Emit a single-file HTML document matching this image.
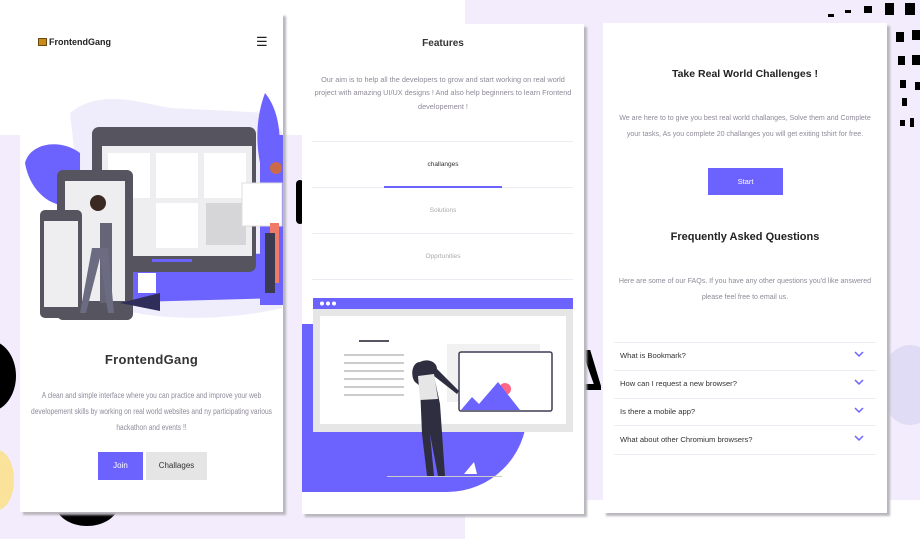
<!DOCTYPE html>
<html><head><meta charset="utf-8"><style>
*{margin:0;padding:0;box-sizing:border-box}
body{width:920px;height:539px;overflow:hidden;background:#f2ecfc;position:relative;font-family:"Liberation Sans",sans-serif}
.abs{position:absolute}
.panel{position:absolute;background:#fff;box-shadow:3px 3px 2px #b9b6bd}
.c{text-align:center;position:absolute;left:0;right:0}
.gray{color:#8f8a99}
.line{position:absolute;height:1px;background:#ececf2}
.l{display:block;white-space:nowrap;margin:0 -80px}
</style></head><body>
<div class="abs" style="left:0;top:0;width:465px;height:135px;background:#fff"></div>
<div class="abs" style="left:465px;top:500px;width:455px;height:39px;background:#fff"></div>
<div class="abs" style="left:-40px;top:340px;width:56px;height:72px;border-radius:50%;background:#000"></div>
<div class="abs" style="left:-20px;top:450px;width:34px;height:60px;border-radius:50%;background:#fbe29a"></div>
<div class="abs" style="left:55px;top:480px;width:64px;height:46px;border-radius:50%;background:#000"></div>
<div class="abs" style="left:880px;top:345px;width:60px;height:80px;border-radius:50%;background:#e0dcf5"></div>
<div class="abs" style="left:296px;top:180px;width:8px;height:44px;border-radius:4px;background:#000"></div>
<div class="abs" style="left:583px;top:350px;width:18px;height:40px;background:#000;clip-path:polygon(0 0,40% 0,100% 90%,100% 100%,0 100%,0 85%,60% 85%,0 10%)"></div>
<svg class="abs" style="left:800px;top:0" width="120" height="150"><g fill="#000">
<rect x="64" y="6" width="8" height="7"/><rect x="85" y="3" width="9" height="12"/><rect x="105" y="3" width="10" height="12"/>
<rect x="112" y="30" width="8" height="10"/><rect x="96" y="32" width="8" height="10"/><rect x="112" y="55" width="8" height="10"/><rect x="98" y="56" width="7" height="9"/>
<rect x="100" y="80" width="6" height="8"/><rect x="115" y="82" width="5" height="8"/><rect x="102" y="98" width="5" height="8"/><rect x="110" y="118" width="4" height="9"/><rect x="100" y="120" width="5" height="6"/>
<rect x="45" y="10" width="6" height="3"/><rect x="28" y="14" width="6" height="3"/></g></svg>

<!-- PANEL 1 -->
<div class="panel" style="left:20px;top:13px;width:263px;height:499px">
 <div class="abs" style="left:18px;top:25px;width:9px;height:8px;background:#c98a1a;border:1px solid #6b4a10"></div>
 <div class="abs" style="left:29px;top:24px;font-size:9px;font-weight:bold;color:#222">FrontendGang</div>
 <div class="abs" style="left:236px;top:21px;font-size:13px;color:#222">☰</div>
 <svg class="abs" style="left:0;top:60px" width="263" height="260">
  <path d="M50 40 C80 15 120 30 150 35 L250 40 L262 60 L262 235 C200 250 100 250 70 220 Z" fill="#efedfc"/>
  <rect x="240" y="62" width="23" height="170" fill="#6c63ff"/>
  <path d="M80 230 L262 225 L262 180 L90 185 Z" fill="#6c63ff"/>
  <path d="M245 20 C230 60 240 100 250 120 C265 80 262 40 245 20Z" fill="#6c63ff"/>
  <path d="M5 90 C10 70 40 65 60 80 L60 130 C35 140 10 120 5 90Z" fill="#6c63ff"/>
  <rect x="72" y="54" width="164" height="145" rx="7" fill="#55545f"/>
  <rect x="82" y="73" width="150" height="110" fill="#eeeef0"/>
  <g fill="#fff"><rect x="88" y="80" width="42" height="45"/><rect x="136" y="80" width="42" height="45"/><rect x="184" y="80" width="42" height="45"/><rect x="136" y="130" width="42" height="45"/></g>
  <rect x="186" y="130" width="40" height="42" fill="#d6d6d8"/>
  <rect x="132" y="186" width="40" height="3" fill="#6c63ff"/>
  <rect x="37" y="97" width="76" height="150" rx="6" fill="#55545f"/>
  <rect x="45" y="108" width="60" height="120" fill="#eeeef0"/>
  <rect x="20" y="137" width="42" height="108" rx="5" fill="#55545f"/>
  <rect x="24" y="148" width="34" height="86" fill="#eeeef0"/>
  <rect x="222" y="110" width="40" height="43" fill="#fff" stroke="#ddd"/>
  <rect x="80" y="150" width="12" height="80" fill="#656577"/>
  <circle cx="78" cy="130" r="8" fill="#3b2a22"/>
  <path d="M72 175 L60 240 L66 240 L80 185 L88 240 L94 240 L88 175Z" fill="#6b6b82"/>
  <rect x="250" y="150" width="9" height="60" fill="#f07a66"/>
  <circle cx="256" cy="95" r="6" fill="#c96a4a"/>
  <rect x="245" y="160" width="10" height="60" fill="#3a3a50"/>
  <rect x="118" y="200" width="18" height="20" fill="#fff"/>
  <path d="M100 230 L140 220 L140 238 Z" fill="#2f2e5a"/>
 </svg>
 <div class="c" style="top:339px;font-size:13px;font-weight:bold;color:#333;letter-spacing:.3px">FrontendGang</div>
 <div class="c gray" style="top:374px;font-size:8.6px;line-height:16px">
  <span class="l" style="transform:scaleX(.77)">A clean and simple interface where you can practice and improve your web</span>
  <span class="l" style="transform:scaleX(.77)">developement skills by working on real world websites and ny participating various</span>
  <span class="l" style="transform:scaleX(.77)">hackathon and events !!</span></div>
 <div class="abs" style="left:78px;top:439px;width:45px;height:28px;background:#6c63ff;color:#fff;font-size:8px;text-align:center;line-height:28px">Join</div>
 <div class="abs" style="left:126px;top:439px;width:61px;height:28px;background:#e5e5e5;color:#333;font-size:8px;text-align:center;line-height:28px">Challages</div>
</div>

<!-- PANEL 2 -->
<div class="panel" style="left:302px;top:24px;width:282px;height:490px;overflow:hidden">
 <div class="c" style="top:14px;font-size:10px;font-weight:bold;color:#333">Features</div>
 <div class="c gray" style="top:49px;font-size:7.3px;line-height:13.3px">
  <span class="l">Our aim is to help all the developers to grow and start working on real world</span>
  <span class="l">project with amazing UI/UX designs ! And also help beginners to learn Frontend</span>
  <span class="l">developement !</span></div>
 <div class="line" style="left:10px;width:261px;top:117px"></div>
 <div class="c" style="top:137px;font-size:6.5px;color:#333">challanges</div>
 <div class="line" style="left:10px;width:261px;top:163px"></div>
 <div class="abs" style="left:82px;width:118px;top:162px;height:2px;background:#6c63ff"></div>
 <div class="c" style="top:183px;font-size:6.5px;color:#aaa">Solutions</div>
 <div class="line" style="left:10px;width:261px;top:209px"></div>
 <div class="c" style="top:229px;font-size:6.5px;color:#aaa">Opprtunities</div>
 <div class="line" style="left:10px;width:261px;top:255px"></div>
 <svg class="abs" style="left:0;top:270px" width="282" height="220">
  <path d="M0 30 H225 V120 A80 80 0 0 1 145 198 H0Z" fill="#6c63ff"/>
  <rect x="11" y="14" width="260" height="124" fill="#e6e6e6"/>
  <rect x="11" y="4" width="260" height="11" fill="#6c63ff"/>
  <g fill="#fff"><circle cx="20" cy="9.5" r="2"/><circle cx="26" cy="9.5" r="2"/><circle cx="32" cy="9.5" r="2"/></g>
  <rect x="18" y="22" width="246" height="108" fill="#fff"/>
  <rect x="57" y="46" width="30" height="2" fill="#55545f"/>
  <g fill="#ccc"><rect x="42" y="60" width="60" height="2"/><rect x="42" y="68" width="60" height="2"/><rect x="42" y="76" width="60" height="2"/><rect x="42" y="84" width="60" height="2"/><rect x="42" y="92" width="60" height="2"/><rect x="42" y="100" width="60" height="2"/></g>
  <rect x="145" y="50" width="93" height="58" fill="#f1f1f1"/>
  <rect x="157" y="58" width="93" height="59" rx="2" fill="#fff" stroke="#3f3d56" stroke-width="1.5"/>
  <circle cx="203" cy="95" r="6" fill="#ff6584"/>
  <path d="M159 116 L170 103 L177 110 L196 88 L218 116Z" fill="#6c63ff"/>
  <path d="M118 68 C110 68 108 82 113 88 L118 92 L120 140 L125 182 L132 182 L128 140 L136 182 L143 182 L138 110 L132 82 L155 100 L157 97 L135 75 C135 68 126 64 118 68Z" fill="#2f2e41"/>
  <path d="M116 82 L132 80 L136 105 L118 106Z" fill="#e6e6e6"/>
  <path d="M162 180 L172 168 L175 180Z" fill="#fff"/>
  <rect x="85" y="182" width="115" height="1" fill="#ccc"/>
 </svg>
</div>

<!-- PANEL 3 -->
<div class="panel" style="left:603px;top:23px;width:284px;height:490px">
 <div class="c" style="top:45px;font-size:10.5px;font-weight:bold;color:#222">Take Real World Challenges !</div>
 <div class="c gray" style="top:87px;font-size:7.6px;line-height:16px">
  <span class="l" style="transform:scaleX(.93)">We are here to to give you best real world challanges, Solve them and Complete</span>
  <span class="l" style="transform:scaleX(.93)">your tasks, As you complete 20 challanges you will get exiting tshirt for free.</span></div>
 <div class="abs" style="left:105px;top:145px;width:75px;height:27px;background:#6c63ff;color:#fff;font-size:7.5px;text-align:center;line-height:27px">Start</div>
 <div class="c" style="top:208px;font-size:11px;font-weight:bold;color:#222">Frequently Asked Questions</div>
 <div class="c gray" style="top:250px;font-size:7.6px;line-height:16px">
  <span class="l" style="transform:scaleX(.93)">Here are some of our FAQs. If you have any other questions you'd like answered</span>
  <span class="l" style="transform:scaleX(.93)">please feel free to email us.</span></div>
 <div class="line" style="left:11px;width:262px;top:319px"></div>
 <div class="abs" style="left:17px;top:328px;font-size:7.6px;color:#333">What is Bookmark?</div>
 <div class="line" style="left:11px;width:262px;top:347px"></div>
 <div class="abs" style="left:17px;top:356px;font-size:7.6px;color:#333">How can I request a new browser?</div>
 <div class="line" style="left:11px;width:262px;top:375px"></div>
 <div class="abs" style="left:17px;top:384px;font-size:7.6px;color:#333">Is there a mobile app?</div>
 <div class="line" style="left:11px;width:262px;top:402px"></div>
 <div class="abs" style="left:17px;top:412px;font-size:7.6px;color:#333">What about other Chromium browsers?</div>
 <div class="line" style="left:11px;width:262px;top:431px"></div>
 <svg class="abs" style="left:250px;top:327px" width="12" height="92" fill="none" stroke="#6c63ff" stroke-width="1.5">
  <path d="M2 2 L6 6 L10 2"/><path d="M2 30 L6 34 L10 30"/><path d="M2 58 L6 62 L10 58"/><path d="M2 86 L6 90 L10 86"/>
 </svg>
</div>
</body></html>
